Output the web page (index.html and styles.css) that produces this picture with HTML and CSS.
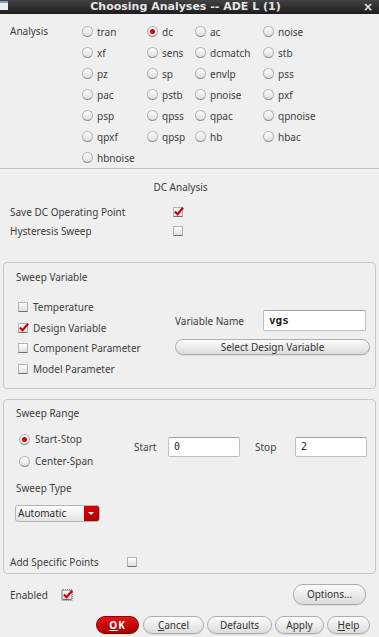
FILE: index.html
```html
<!DOCTYPE html>
<html lang="en">
<head>
    <meta charset="UTF-8">
    <meta name="viewport" content="width=device-width, initial-scale=1.0">
    <title>Choosing Analyses -- ADE L (1)</title>
    <link rel="stylesheet" href="styles.css">
</head>
<body>
    <div class="titlebar">
        <span class="win-icon"></span>
        <span class="title">Choosing Analyses -- ADE L (1)</span>
        <span class="close">&#215;</span>
    </div>

    <!-- Analysis type selector -->
    <div class="analysis">
        <div class="analysis-label">Analysis</div>
        <div class="analysis-grid">
            <label class="radio"><span class="dot"></span>tran</label>
            <label class="radio"><span class="dot on"></span>dc</label>
            <label class="radio"><span class="dot"></span>ac</label>
            <label class="radio"><span class="dot"></span>noise</label>
            <label class="radio"><span class="dot"></span>xf</label>
            <label class="radio"><span class="dot"></span>sens</label>
            <label class="radio"><span class="dot"></span>dcmatch</label>
            <label class="radio"><span class="dot"></span>stb</label>
            <label class="radio"><span class="dot"></span>pz</label>
            <label class="radio"><span class="dot"></span>sp</label>
            <label class="radio"><span class="dot"></span>envlp</label>
            <label class="radio"><span class="dot"></span>pss</label>
            <label class="radio"><span class="dot"></span>pac</label>
            <label class="radio"><span class="dot"></span>pstb</label>
            <label class="radio"><span class="dot"></span>pnoise</label>
            <label class="radio"><span class="dot"></span>pxf</label>
            <label class="radio"><span class="dot"></span>psp</label>
            <label class="radio"><span class="dot"></span>qpss</label>
            <label class="radio"><span class="dot"></span>qpac</label>
            <label class="radio"><span class="dot"></span>qpnoise</label>
            <label class="radio"><span class="dot"></span>qpxf</label>
            <label class="radio"><span class="dot"></span>qpsp</label>
            <label class="radio"><span class="dot"></span>hb</label>
            <label class="radio"><span class="dot"></span>hbac</label>
            <label class="radio"><span class="dot"></span>hbnoise</label>
        </div>
    </div>

    <!-- DC options -->
    <div class="dc">
        <div class="dc-title">DC Analysis</div>
        <div class="opt-row">
            <span>Save DC Operating Point</span>
            <span class="check on"><svg viewBox="0 0 12 12" width="11" height="11"><path d="M2 6 L5 9 L11 2" fill="none" stroke="#d40000" stroke-width="2.4"/></svg></span>
        </div>
        <div class="opt-row">
            <span>Hysteresis Sweep</span>
            <span class="check"></span>
        </div>
    </div>

    <div class="group sweep-var">
        <div class="group-title">Sweep Variable</div>
        <div class="sv-body">
            <div class="sv-checks">
                <div class="check-row"><span class="check"></span>Temperature</div>
                <div class="check-row"><span class="check on"><svg viewBox="0 0 12 12" width="11" height="11"><path d="M2 6 L5 9 L11 2" fill="none" stroke="#d40000" stroke-width="2.4"/></svg></span>Design Variable</div>
                <div class="check-row"><span class="check"></span>Component Parameter</div>
                <div class="check-row"><span class="check"></span>Model Parameter</div>
            </div>
            <div class="sv-right">
                <div class="var-row">
                    <span>Variable Name</span>
                    <span class="field field-name">vgs</span>
                </div>
                <div class="btn wide">Select Design Variable</div>
            </div>
        </div>
    </div>

    <div class="group sweep-range">
        <div class="group-title">Sweep Range</div>
        <div class="sr-body">
            <div class="sr-radios">
                <label class="radio tall"><span class="dot on"></span>Start-Stop</label>
                <label class="radio tall"><span class="dot"></span>Center-Span</label>
            </div>
            <div class="sr-fields">
                <span class="sr-label">Start</span>
                <span class="field field-num">0</span>
                <span class="sr-label stop">Stop</span>
                <span class="field field-num">2</span>
            </div>
        </div>
        <div class="group-title sub">Sweep Type</div>
        <div class="combo">
            <span class="combo-text">Automatic</span>
            <span class="combo-arrow"></span>
        </div>
        <div class="points-row">
            <span class="points-label">Add Specific Points</span>
            <span class="check"></span>
        </div>
    </div>

    <div class="enabled-row">
        <span class="enabled-label">Enabled</span>
        <span class="check on focus"><svg viewBox="0 0 12 12" width="11" height="11"><path d="M2 6 L5 9 L11 2" fill="none" stroke="#d40000" stroke-width="2.4"/></svg></span>
        <div class="btn options">Options...</div>
    </div>

    <div class="buttons">
        <div class="btn ok"><u>O</u>K</div>
        <div class="btn cancel"><u>C</u>ancel</div>
        <div class="btn defaults">Defaults</div>
        <div class="btn apply">Apply</div>
        <div class="btn help"><u>H</u>elp</div>
    </div>
</body>
</html>
```

FILE: styles.css
```css
body {
    margin: 0;
    width: 379px;
    height: 637px;
    overflow: hidden;
    background-color: #efefef;
    font-family: "Noto Sans", "DejaVu Sans", sans-serif;
    font-size: 10px;
    color: #3d3d3d;
}

/* Window title bar */
.titlebar {
    height: 14px;
    display: flex;
    background: linear-gradient(#434343, #1c1c1c);
    color: #e4e4e4;
    font-family: "DejaVu Sans", sans-serif;
}

.win-icon {
    width: 8px;
    height: 7px;
    margin-top: 1px;
    background-color: #e9edf2;
    border-top: 2px solid #7c9cc4;
}

.title {
    flex: 1;
    text-align: center;
    font-weight: bold;
    font-size: 11px;
    line-height: 14px;
    padding-left: 6px;
}

.close {
    width: 22px;
    font-weight: bold;
    font-size: 12px;
    line-height: 14px;
    text-align: center;
}

/* Analysis radios */
.analysis {
    display: flex;
    padding: 7px 0 0 10px;
    border-bottom: 1px solid #c4c4c4;
}

.analysis-label {
    width: 72px;
    line-height: 21px;
}

.analysis-grid {
    display: grid;
    grid-template-columns: 65px 48px 68px 1fr;
    grid-auto-rows: 21px;
}

.radio {
    display: flex;
    align-items: center;
    gap: 4px;
}

.dot {
    width: 9px;
    height: 9px;
    border-radius: 50%;
    border: 1px solid #b4b4b4;
    border-bottom-color: #8e8e8e;
    background: linear-gradient(#fefefe, #dedede);
    position: relative;
}

.dot.on::after {
    content: "";
    position: absolute;
    left: 2px;
    top: 2px;
    width: 5px;
    height: 5px;
    border-radius: 50%;
    background-color: #d80000;
}

/* DC section */
.dc {
    padding-top: 10px;
}

.dc-title {
    text-align: center;
    line-height: 16px;
    margin-bottom: 7px;
    padding-right: 18px;
}

.opt-row {
    display: grid;
    grid-template-columns: 163px auto;
    align-items: center;
    height: 19px;
    padding-left: 10px;
}

.check {
    display: inline-block;
    width: 8px;
    height: 8px;
    border: 1px solid #b2b2b2;
    border-bottom-color: #707070;
    border-radius: 1px;
    background: linear-gradient(#ffffff, #dedede);
    position: relative;
}

.check svg {
    position: absolute;
    left: -1px;
    top: -2px;
}

.check.focus {
    outline: 1px dotted #777;
    outline-offset: 0;
}

/* Group boxes */
.group {
    margin: 22px 3px 0;
    border: 1px solid #c8c8c8;
    border-radius: 4px;
}

.group-title {
    padding: 6px 0 0 12px;
    line-height: 16px;
}

.sv-body {
    display: flex;
    padding: 12px 5px 9px 14px;
}

.sv-checks {
    width: 157px;
}

.check-row {
    height: 20.5px;
    display: flex;
    align-items: center;
    gap: 5px;
}

.sv-right {
    flex: 1;
    padding-top: 13px;
}

.var-row {
    display: flex;
    align-items: center;
    height: 21px;
}

.field {
    background-color: #fff;
    border: 1px solid #c0c0c0;
    border-top-color: #a0a0a0;
    border-radius: 2px;
    box-sizing: border-box;
    height: 21px;
    line-height: 19px;
    padding-left: 5px;
    font-family: "DejaVu Sans Mono", monospace;
    color: #1e1e1e;
}

.field-name {
    margin-left: auto;
    margin-right: 4px;
    width: 103px;
    font-weight: bold;
    font-size: 11px;
}

.field-num {
    width: 72px;
}

.btn {
    box-sizing: border-box;
    border: 1px solid #adadad;
    border-radius: 9px;
    background: linear-gradient(#fcfcfc, #dcdcdc);
    text-align: center;
    color: #333;
    box-shadow: 0 1px 0 rgba(0, 0, 0, 0.08);
}

.btn.wide {
    margin-top: 8px;
    height: 16px;
    line-height: 14px;
}

.sweep-range {
    margin-top: 10px;
}

.sweep-range .group-title {
    padding-top: 5px;
}

.sr-body {
    display: flex;
    padding: 7px 0 0 15px;
}

.sr-radios {
    width: 115px;
}

.radio.tall {
    height: 22px;
    gap: 5px;
}

.sr-fields {
    display: flex;
    align-items: center;
    margin-top: 9px;
    height: 20px;
}

.sr-label {
    width: 34px;
}

.sr-label.stop {
    width: 40px;
    margin-left: 15px;
}

.sr-fields .field {
    height: 20px;
    line-height: 18px;
}

.group-title.sub {
    padding-top: 8px;
}

.combo {
    display: flex;
    margin: 9px 0 0 11px;
    width: 85px;
    height: 17px;
    box-sizing: border-box;
    border: 1px solid #b4b4b4;
    border-radius: 3px;
    background: linear-gradient(#ffffff, #e2e2e2);
    overflow: hidden;
}

.combo-text {
    flex: 1;
    line-height: 15px;
    padding-left: 2px;
    color: #2a2a2a;
}

.combo-arrow {
    width: 15px;
    background: linear-gradient(#d80000, #b00000);
    position: relative;
}

.combo-arrow::after {
    content: "";
    position: absolute;
    left: 4px;
    top: 6px;
    border-left: 3px solid transparent;
    border-right: 3px solid transparent;
    border-top: 3px solid #fff;
}

.points-row {
    display: flex;
    align-items: center;
    height: 16px;
    margin-top: 32px;
    padding: 0 0 3px 6px;
}

.points-label {
    width: 117px;
}

/* Bottom rows */
.enabled-row {
    display: flex;
    align-items: center;
    height: 21px;
    margin-top: 10px;
    padding: 0 13px 0 10px;
}

.enabled-label {
    width: 52px;
}

.btn.options {
    margin-left: auto;
    width: 73px;
    height: 21px;
    line-height: 19px;
    border-radius: 10px;
}

.buttons {
    display: flex;
    justify-content: flex-end;
    gap: 3px;
    margin-top: 11px;
    padding-right: 9px;
}

.buttons .btn {
    height: 18px;
    line-height: 16px;
}

.btn.ok {
    width: 43px;
    margin-right: 1px;
    background: linear-gradient(#e41414, #a80000);
    border-color: #8c0000;
    color: #fff;
    font-weight: bold;
    letter-spacing: 1px;
}

.btn.cancel {
    width: 61px;
}

.btn.defaults {
    width: 65px;
}

.btn.apply {
    width: 49px;
}

.btn.help {
    width: 43px;
}
```
